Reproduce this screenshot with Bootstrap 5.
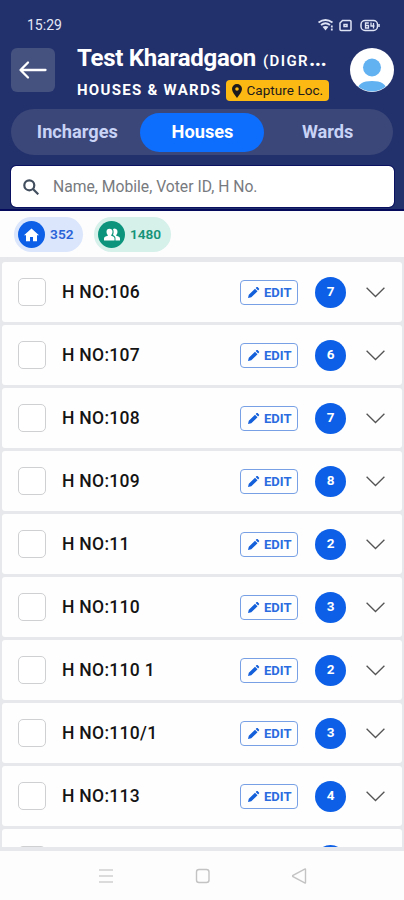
<!DOCTYPE html>
<html lang="en">
<head>
<meta charset="utf-8">
<meta name="viewport" content="width=device-width, initial-scale=1">
<title>Houses &amp; Wards</title>
<link href="https://cdn.jsdelivr.net/npm/bootstrap@5.3.0/dist/css/bootstrap.min.css" rel="stylesheet">
<style>
body{font-family:Roboto,"Liberation Sans",sans-serif;height:900px;overflow:hidden;background:#fdfdfe;color:#141414;line-height:1}
svg{display:block;flex:none}
.app-head{background:#22306c;height:211px;border-bottom:2px solid #050a5c;flex:none}
.status{height:49px;padding:1px 24px 0 27px;font-size:14px;color:#e4e8f6}
.title-row{height:60px;padding:0 10px 0 11px}
.back{width:44px;height:44px;border-radius:6px;background:#45517f;flex:none;margin-top:-1px}
.titles{margin-left:22px;width:252px}
.village{font-size:24px;font-weight:700;letter-spacing:-.27px;height:27px;line-height:27px;margin-top:-4px}
.district{font-size:15px;font-weight:600;letter-spacing:1.4px;margin-left:7px}
.dots{font-size:22px;letter-spacing:-.7px}
.section-name{font-size:15px;font-weight:700;letter-spacing:1.28px;width:150px}
.capture{background:#fdb913;color:#1c1a1c;border-radius:4px;height:21px;width:103px;font-size:13.5px;padding:0 0 0 6px;letter-spacing:.06px}
.pin-label{margin-left:4px}
.avatar{margin-left:21px;margin-top:-1px}
.seg{height:46px;margin:0 11px;background:#3b4779;border-radius:23px;padding:4px 3px;font-size:18.2px;font-weight:700;color:#c8d3f6}
.seg .pick{height:39px;border-radius:20px;padding-left:1px}
.seg .pick.on{background:#0d6efd;color:#fff;width:125px}
.seg .side{width:126px}
.search{height:41px;margin:11px 10px 0 11px;background:#fff;border-radius:5px;outline:1px solid #0a1160;padding-left:12px;font-size:15.7px;color:#777a7e}
.hint{margin-left:14px}
.stats{height:46px;padding:1px 14px 0;flex:none}
.stat{height:35px;border-radius:18px;padding-left:4px;font-size:13.7px;letter-spacing:.1px;background:#dbe6fc;color:#2a63d8}
.stat b{font-weight:600}
.stat.people{background:#d6f0ea;color:#159378;letter-spacing:-.1px;width:77px;margin-left:11px}
.stat.homes{width:69px}
.disc{width:27px;height:27px;border-radius:50%;background:#0c5fe6;margin-right:5px}
.people .disc{background:#0c957c}
.house-list{height:594px;background:#e6e8eb;overflow:hidden;padding:5px 2px 0;flex:none;border-bottom:4px solid #e6e8eb}
.house{height:60px;margin-bottom:3px;background:#fefefe;border-radius:3px;padding:0 17px 0 16px}
.house.next{padding-top:2px}
.tick{width:28px;height:28px;border:1.5px solid #cfd0d2;border-radius:5px;margin-right:16px;background:#fff}
.hno{font-size:17.5px;font-weight:500;letter-spacing:.3px;margin-top:1px}
.edit{width:58px;height:25px;border:1px solid #78a1e5;border-radius:4px;color:#2a6be0;font-size:13px;font-weight:700;padding-left:6px;margin-right:17px}
.edit span{margin-left:4px}
.count{width:31px;height:31px;border-radius:50%;background:#0c5fe6;color:#fff;font-size:13.5px;font-weight:700;margin-right:20px}
.spacer{width:19px}
.sysnav{flex:1}
</style>
<script src="https://cdn.jsdelivr.net/npm/bootstrap@5.3.0/dist/js/bootstrap.bundle.min.js"></script>
</head>
<body class="d-flex flex-column">
<header class="app-head">
  <div class="status d-flex align-items-center justify-content-between">
    <span>15:29</span>
    <div class="d-flex align-items-center">
      <svg width="17" height="14" viewBox="0 0 17 14" fill="none" stroke="#dfe4f4" stroke-width="1.800"><path d="M.5 4.500Q7.500-.5 14.500 4.500M3 7Q7.500 3.500 12 7"/><path d="M4.500 8.800Q7.500 7 10.500 8.800L7.500 12.500z" fill="#dfe4f4" stroke="none"/><path d="M13.800 7.500v5" stroke-width="1.800" stroke-dasharray="2 1"/></svg>
      <svg class="ms-1" width="13" height="13" viewBox="0 0 13 13" fill="none" stroke="#dfe4f4" stroke-width="1.500"><path d="M3.500 1.500H11a1 1 0 0 1 1 1v8a1 1 0 0 1-1 1H2a1 1 0 0 1-1-1V4z"/><path d="M5 5.500h3v2H5z"/></svg>
      <svg class="ms-2" width="20" height="13" viewBox="0 0 20 13" fill="none" stroke="#dfe4f4" stroke-width="1.500"><rect x="1" y="1.500" width="16.500" height="10" rx="4"/><path d="M19 5v3"/><path d="M8.800 4H5.500v5h3V6.500h-3M11 3.500v3.500h3.500M13.500 4v5.500" stroke-width="1.300"/></svg>
    </div>
  </div>
  <div class="title-row d-flex text-white">
    <button class="back btn p-0 border-0 d-flex align-items-center justify-content-center" aria-label="Back">
      <svg width="30" height="20" viewBox="0 0 30 20" fill="none" stroke="#fff" stroke-width="2.300" stroke-linecap="round" stroke-linejoin="round"><path d="M27.500 10H3M10 2.500L2.500 10l7.500 7.500"/></svg>
    </button>
    <div class="titles">
      <div class="village text-nowrap">Test Kharadgaon<span class="district">(DIGR</span><span class="dots">...</span></div>
      <div class="d-flex align-items-center mt-2">
        <span class="section-name text-nowrap">HOUSES &amp; WARDS</span>
        <button class="capture btn border-0 d-flex align-items-center text-nowrap">
          <svg width="10" height="14" viewBox="0 0 10 14"><path fill="#1c1a1c" fill-rule="evenodd" d="M5 0a5 5 0 0 1 5 5c0 2.500-2.500 5.500-5 9-2.500-3.500-5-6.500-5-9a5 5 0 0 1 5-5zm0 3.200a1.800 1.800 0 1 0 0 3.600 1.800 1.800 0 0 0 0-3.600z"/></svg>
          <span class="pin-label">Capture Loc.</span>
        </button>
      </div>
    </div>
    <svg class="avatar" width="44" height="44" viewBox="0 0 44 44"><defs><clipPath id="face"><circle cx="22" cy="22" r="21.500"/></clipPath></defs><circle cx="22" cy="22" r="22" fill="#fff"/><g fill="#62b1f1" clip-path="url(#face)"><circle cx="22" cy="19.500" r="9"/><path d="M7 44c0-8 6-11 15-11s15 3 15 11z"/></g></svg>
  </div>
  <div class="seg d-flex">
    <div class="pick side d-flex align-items-center justify-content-center">Incharges</div>
    <div class="pick on d-flex align-items-center justify-content-center">Houses</div>
    <div class="pick side d-flex align-items-center justify-content-center">Wards</div>
  </div>
  <div class="search d-flex align-items-center">
    <svg width="16" height="16" viewBox="0 0 16 16" fill="none" stroke="#424e5e" stroke-width="2.200"><circle cx="6.300" cy="6.300" r="5"/><path d="M10 10l5.300 5.300"/></svg>
    <span class="hint">Name, Mobile, Voter ID, H No.</span>
  </div>
</header>
<section class="stats d-flex align-items-center">
  <div class="stat homes d-flex align-items-center"><span class="disc d-flex align-items-center justify-content-center"><svg width="15" height="14" viewBox="0 0 15 14" fill="#fff"><path d="M7.500.4L15 7.200h-2V13.300H9V9H6v4.300H2V7.200H0z"/></svg></span><b>352</b></div>
  <div class="stat people d-flex align-items-center"><span class="disc d-flex align-items-center justify-content-center"><svg width="16" height="14" viewBox="0 0 16 14" fill="#fff"><path d="M5.500.7a3 3 0 0 1 3 3c0 1.500-.6 2.600-1.300 3.200v.8c2 .5 3.300 1.300 3.300 2.800v2H0v-2C0 9 1.500 8.200 3.800 7.700v-.8C3.100 6.300 2.500 5.200 2.500 3.700a3 3 0 0 1 3-3z"/><path d="M9 1a3 3 0 0 1 4.500 2.700c0 1.500-.6 2.600-1.300 3.200v.8C14.500 8.200 16 9 16 10.500v2h-4.500v-2c0-1.500-.8-2.600-2.500-3.400.7-1.500 1-4 0-6.100z"/></svg></span><b>1480</b></div>
</section>
<main class="house-list" id="houses"></main>
<nav class="sysnav d-flex align-items-center justify-content-center">
  <svg width="404" height="20" viewBox="0 0 404 20" fill="none" stroke="#c3c3c4" stroke-width="1.400"><path d="M99 4h14M99 10h14M99 16h14" stroke="#d0d0d1"/><rect x="196.500" y="3.500" width="12.500" height="13" rx="2.500"/><path d="M305.500 3.500v13q0 .8-.8.400L293 10.700q-.8-.7 0-1.400L304.700 3.100q.8-.4.800.4z"/></svg>
</nav>
<script>
const houses = [["106",7],["107",6],["108",7],["109",8],["11",2],["110",3],["110 1",2],["110/1",3],["113",4]];
const pencil = `<svg width="13" height="13" viewBox="0 0 13 13" fill="#145fda"><path d="M1 12l.8-3.300L8 2.700 10.500 5.200 4.300 11.300zM8.700 2l.9-.9q.5-.4 1 0l1.400 1.400q.5.500 0 1l-.9.900z"/></svg>`;
const rows = houses.map(([no, people]) => `
  <div class="house d-flex align-items-center">
    <span class="tick flex-shrink-0"></span>
    <span class="hno me-auto text-nowrap">H NO:${no}</span>
    <span class="edit d-flex align-items-center">${pencil}<span>EDIT</span></span>
    <span class="count d-flex align-items-center justify-content-center">${people}</span>
    <svg width="19" height="11" viewBox="0 0 19 11" fill="none" stroke="#555" stroke-width="1.300"><path d="M.6.800L9.500 9.500 18.400.800"/></svg>
  </div>`);
rows.push(`
  <div class="house next d-flex align-items-center">
    <span class="tick me-auto"></span>
    <span class="count"></span><span class="spacer"></span>
  </div>`);
document.getElementById("houses").innerHTML = rows.join("");
</script>
</body>
</html>
